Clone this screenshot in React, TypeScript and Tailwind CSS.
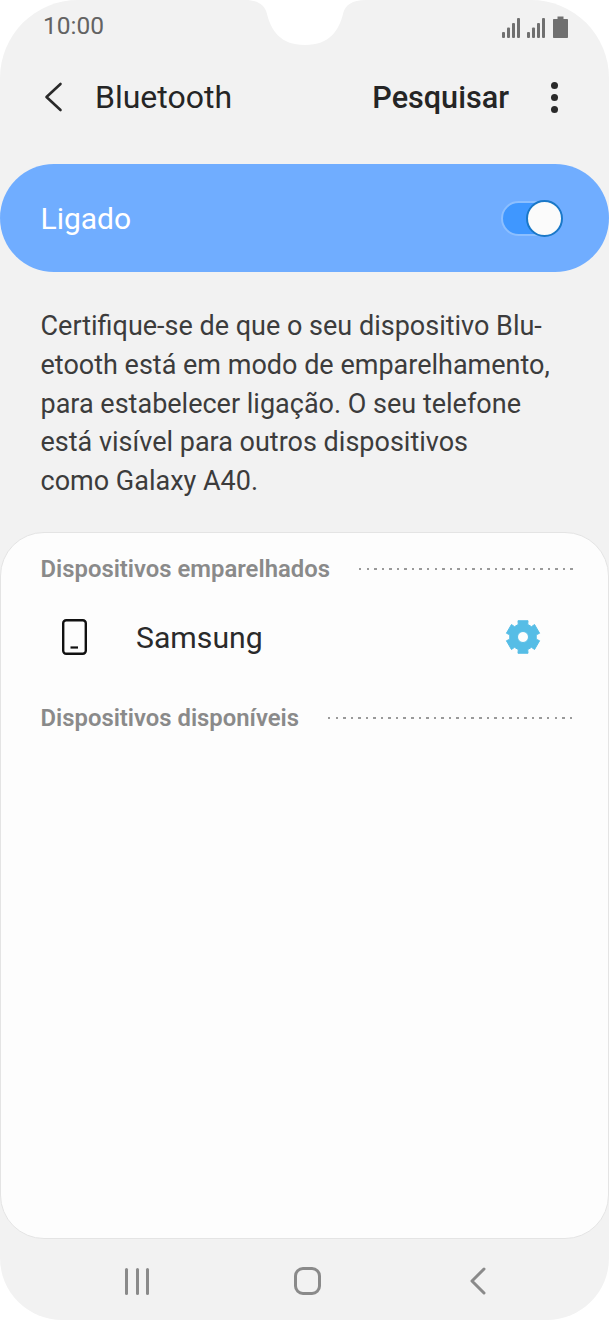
const rob = "font-['Roboto',sans-serif]";

function gearPath() {
  const cx = 20, cy = 20, ro = 17, ri = 13.4;
  const pts: string[] = [];
  for (let k = 0; k < 6; k++) {
    const a = -Math.PI / 2 + (k * Math.PI) / 3;
    const seq: [number, number][] = [
      [ri, a - 0.36],
      [ro, a - 0.3],
      [ro, a + 0.3],
      [ri, a + 0.36],
    ];
    for (const [r, t] of seq) pts.push(`${(cx + r * Math.cos(t)).toFixed(2)} ${(cy + r * Math.sin(t)).toFixed(2)}`);
  }
  return `M${pts.join("L")}Z`;
}

function Signal() {
  return (
    <svg width="18" height="20" viewBox="0 0 18 20" fill="#707070">
      <rect x="0" y="14" width="3" height="6" rx="1" />
      <rect x="5" y="9.500" width="3" height="10.500" rx="1" />
      <rect x="10" y="5" width="3" height="15" rx="1" />
      <rect x="15" y="0" width="3" height="20" rx="1" />
    </svg>
  );
}

function SectionHeader({ title }: { title: string }) {
  return (
    <div className="flex items-center pl-[39.500px] pr-[33px]">
      <span className="text-[23.850px] leading-[30px] font-semibold text-[#8a8a8a] whitespace-nowrap">{title}</span>
      <div className="flex-1 ml-[29px] h-[2.500px] bg-[repeating-linear-gradient(90deg,#9a9a9a_0,#9a9a9a_2.500px,transparent_2.500px,transparent_7.55px)]" />
    </div>
  );
}

export default function App() {
  return (
    <div className={`relative w-[609px] h-[1320px] bg-white overflow-hidden ${rob}`}>
      <div className="relative flex flex-col w-full h-full bg-[#f2f2f2] rounded-t-[78px] rounded-b-[62px] overflow-hidden">
        {/* notch */}
        <svg className="absolute left-[240px] top-0" width="130" height="46" viewBox="0 0 130 46" fill="#fff">
          <path d="M5 0C18 0 25 5 27 14C31 30 40 45 65 45C90 45 99 30 103 14C105 5 112 0 126 0Z" />
        </svg>

        {/* status bar */}
        <div className="flex items-center justify-between h-[52px] pl-[43px] pr-[41px] shrink-0">
          <span className="text-[24.500px] leading-[52px] text-[#636363]">10:00</span>
          <div className="flex items-end mt-[1px]">
            <Signal />
            <span className="w-[7px]" />
            <Signal />
            <span className="w-[8px]" />
            <svg width="15" height="22" viewBox="0 0 15 22" fill="#707070">
              <path d="M4.500 0.500H10.500V3H14C14.600 3 15 3.400 15 4V21C15 21.600 14.600 22 14 22H1C0.400 22 0 21.600 0 21V4C0 3.400 0.400 3 1 3H4.500Z" />
            </svg>
          </div>
        </div>

        {/* header */}
        <div className="flex items-center h-[90px] shrink-0 pl-[44px] pr-[51px]">
          <svg width="20" height="30" viewBox="0 0 20 30" fill="none" stroke="#2a2a2a" strokeWidth="2.600" strokeLinecap="round" strokeLinejoin="round">
            <path d="M16.500 2L2.500 15L16.500 28" />
          </svg>
          <span className="ml-[31px] text-[32px] leading-[40px] text-[#252525]">Bluetooth</span>
          <span className="ml-auto pt-[2px] text-[30.600px] leading-[40px] font-medium text-[#252525]">Pesquisar</span>
          <div className="ml-[42px] flex flex-col gap-[5px]">
            <span className="w-[7px] h-[7px] rounded-full bg-[#2a2a2a]" />
            <span className="w-[7px] h-[7px] rounded-full bg-[#2a2a2a]" />
            <span className="w-[7px] h-[7px] rounded-full bg-[#2a2a2a]" />
          </div>
        </div>

        {/* master switch */}
        <div className="mt-[22px] flex items-center justify-between h-[108px] shrink-0 rounded-[54px] bg-[#70adff] pl-[40.500px] pr-[47px]">
          <span className="text-[30px] leading-[38px] pt-[1px] text-white">Ligado</span>
          <div className="relative w-[61px] h-[35px] rounded-full bg-[#3f97ff] border-2 border-[#8cbfff]">
            <span className="absolute right-[-3px] top-[-3px] w-[37px] h-[37px] rounded-full bg-[#fbfbfb] border-2 border-[#1a78c8]" />
          </div>
        </div>

        {/* description */}
        <p className="mt-[35px] px-[40.500px] text-[27px] leading-[38.800px] text-[#3c3c3c] whitespace-nowrap shrink-0">
          Certifique-se de que o seu dispositivo Blu-
          <br />
          etooth está em modo de emparelhamento,
          <br />
          para estabelecer ligação. O seu telefone
          <br />
          está visível para outros dispositivos
          <br />
          como Galaxy A40.
        </p>

        {/* card */}
        <div className="mt-[31px] h-[707px] shrink-0 flex flex-col pt-[21px] rounded-[44px] bg-[#fdfdfd] border border-[#e4e4e4]">
          <SectionHeader title="Dispositivos emparelhados" />
          <div className="flex items-center h-[119px] pb-[13px] pl-[61px] pr-[65px]">
            <svg width="25" height="36" viewBox="0 0 25 36" fill="none" stroke="#111" strokeWidth="2.400">
              <rect x="1.200" y="1.200" width="22.600" height="33.600" rx="3" />
              <path d="M8.500 28.500H16" strokeWidth="2.200" />
            </svg>
            <span className="ml-[49px] pt-[2px] text-[30.200px] leading-[36px] text-[#2a2a2a]">Samsung</span>
            <svg className="ml-auto" width="40" height="40" viewBox="0 0 40 40">
              <path d={`${gearPath()}M20 14.500a5.500 5.500 0 1 0 0 11a5.500 5.500 0 1 0 0-11Z`} fill="#56bde6" fillRule="evenodd" stroke="#56bde6" strokeWidth="1" strokeLinejoin="round" />
            </svg>
          </div>
          <SectionHeader title="Dispositivos disponíveis" />
        </div>

        {/* nav bar */}
        <div className="flex-1 relative flex items-center">
          <div className="flex items-center w-full h-[30px] mt-[4px] pl-[125px]">
            <div className="flex gap-[7.500px]">
              <span className="w-[3px] h-[27px] rounded-full bg-[#8a8a8a]" />
              <span className="w-[3px] h-[27px] rounded-full bg-[#8a8a8a]" />
              <span className="w-[3px] h-[27px] rounded-full bg-[#8a8a8a]" />
            </div>
            <div className="ml-[145px] w-[27px] h-[28px] rounded-[9px] border-[3px] border-[#8a8a8a]" />
            <svg className="ml-[148px]" width="18" height="30" viewBox="0 0 18 30" fill="none" stroke="#8a8a8a" strokeWidth="3" strokeLinecap="round" strokeLinejoin="round">
              <path d="M15 3L3 15L15 27" />
            </svg>
          </div>
        </div>
      </div>
    </div>
  );
}
